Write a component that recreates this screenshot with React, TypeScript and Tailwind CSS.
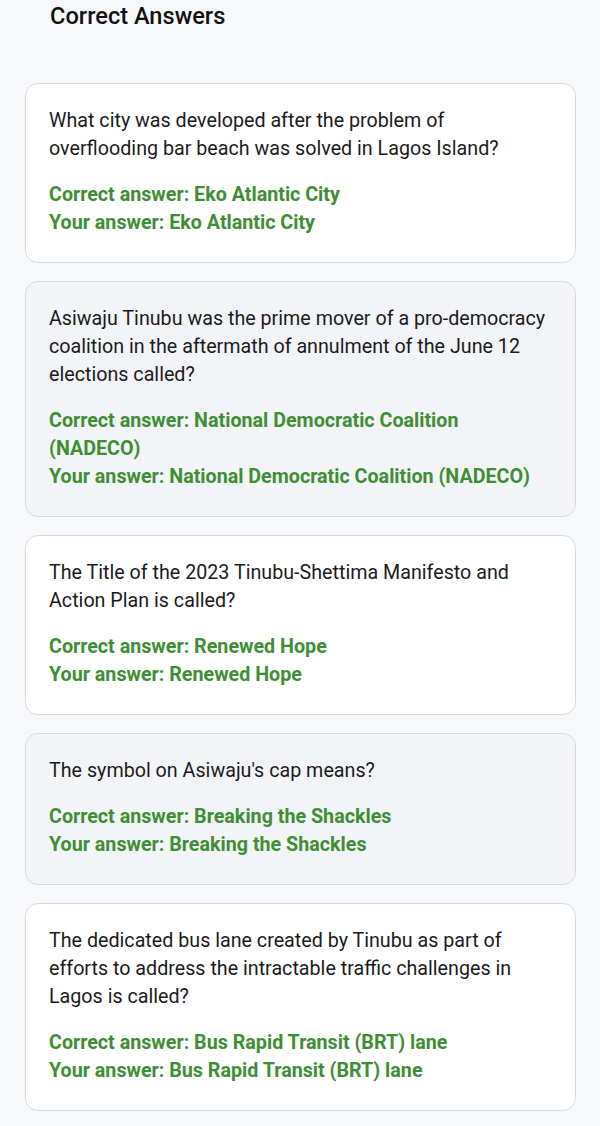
import React from "react";

const items = [
  {
    q: (
      <>
        What city was developed after the problem of
        <br />
        overflooding bar beach was solved in Lagos Island?
      </>
    ),
    a: "Eko Atlantic City",
  },
  {
    q: "Asiwaju Tinubu was the prime mover of a pro-democracy coalition in the aftermath of annulment of the June 12 elections called?",
    a: "National Democratic Coalition (NADECO)",
  },
  {
    q: "The Title of the 2023 Tinubu-Shettima Manifesto and Action Plan is called?",
    a: "Renewed Hope",
  },
  {
    q: "The symbol on Asiwaju's cap means?",
    a: "Breaking the Shackles",
  },
  {
    q: "The dedicated bus lane created by Tinubu as part of efforts to address the intractable traffic challenges in Lagos is called?",
    a: "Bus Rapid Transit (BRT) lane",
  },
];

export default function App() {
  return (
    <div
      className="min-h-[1126px] w-[600px] bg-[#f7f8fa] text-[#1b1b1b]"
      style={{ fontFamily: "Roboto, 'Noto Sans', sans-serif" }}
    >
      <h1 className="pl-[50px] pt-[2px] text-[23.6px] leading-[28px] font-medium text-[#111]">
        Correct Answers
      </h1>
      <div className="mt-[53px] flex flex-col gap-[18px] pl-[25px] pr-[24px]">
        {items.map((it, i) => (
          <div
            key={i}
            className={`rounded-[13px] border border-[#d9d9dc] pl-[23px] pr-[26px] pt-[23px] pb-[25px] ${
              i % 2 === 1 ? "bg-[#f3f4f8]" : "bg-white"
            }`}
          >
            <p className="text-[19.7px] leading-[28px] text-[#1b1b1b]">{it.q}</p>
            <div className="mt-[18px] text-[19.7px] leading-[28px] font-bold text-[#3e8f34]">
              <p>Correct answer: {it.a}</p>
              <p>Your answer: {it.a}</p>
            </div>
          </div>
        ))}
      </div>
    </div>
  );
}
